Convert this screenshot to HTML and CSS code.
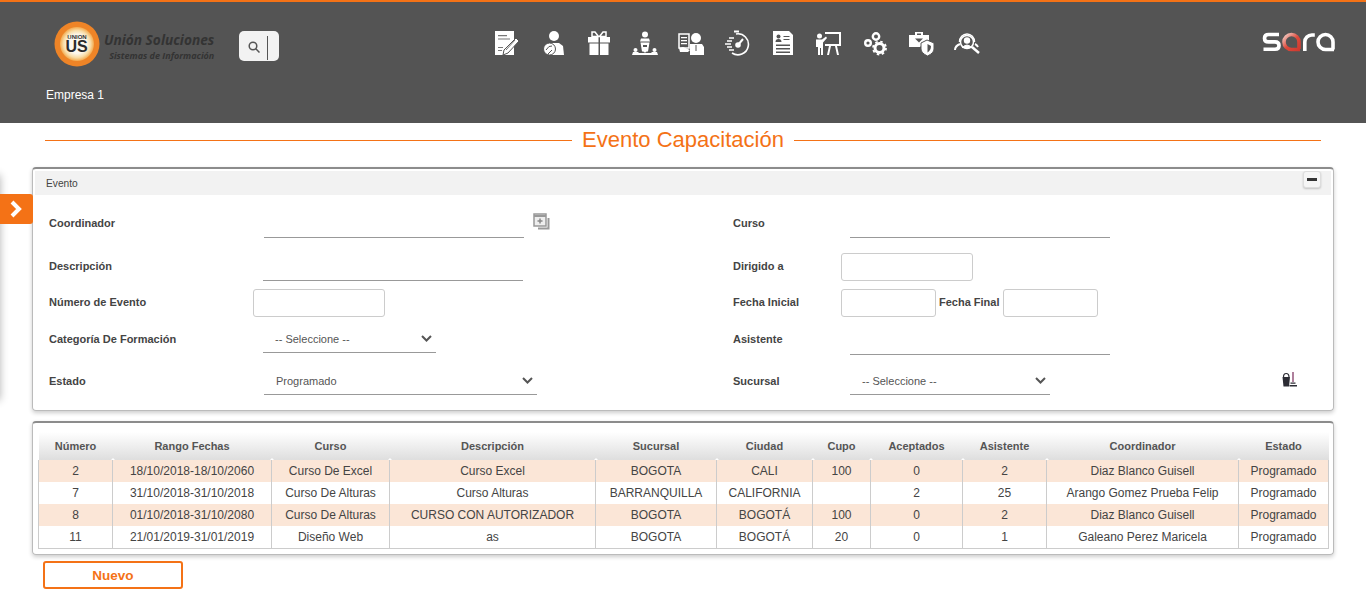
FILE: index.html
```html
<!DOCTYPE html>
<html lang="es">
<head>
    <meta charset="UTF-8">
    <title>Evento Capacitación</title>
    <link rel="stylesheet" href="styles.css">
</head>
<body>
    <header class="topbar">
        <div class="topbar-main">
            <div class="logo">
                <svg class="logo-mark" width="46" height="46" viewBox="0 0 46 46">
                    <defs>
                        <radialGradient id="ringfill">
                            <stop offset="0.55" stop-color="#fdf8ee"/>
                            <stop offset="0.8" stop-color="#f8dca6"/>
                            <stop offset="1" stop-color="#f3a94e"/>
                        </radialGradient>
                    </defs>
                    <circle cx="23" cy="23" r="22.500" fill="#ee8427"/>
                    <circle cx="23" cy="23" r="17" fill="url(#ringfill)"/>
                    <text class="mark-small" x="23" y="17.500" text-anchor="middle">UNION</text>
                    <text class="mark-big" x="22.500" y="31" text-anchor="middle">US</text>
                </svg>
                <div class="logo-text">
                    <span class="logo-name">Unión Soluciones</span>
                    <span class="logo-sub">Sistemas de Información</span>
                </div>
            </div>
            <div class="search-box">
                <svg class="search-glass" width="12" height="12" viewBox="0 0 12 12" fill="none" stroke="#555" stroke-width="1.500"><circle cx="5" cy="5" r="3.800"/><path d="M7.800 7.800L11.500 11.500"/></svg>
                <span class="search-caret"></span>
            </div>
            <nav class="menu-icons">
                <svg viewBox="0 0 26 26" fill="#fff"><path d="M1 1h19v24H1z"/><path d="M4 5h9v1.300H4zM4 8.500h12v1H4zM4 17h5v1H4zM4 20h4v1H4z" fill="#777"/><path d="M22 8l3 3-11 12-5 2 1-5z" stroke="#545454"/><path d="M12 20l9-10" stroke="#777"/></svg>
                <svg viewBox="0 0 26 26" fill="#fff"><circle cx="14" cy="6" r="5"/><path d="M9 13h10l4 3 1 9H9z"/><circle cx="9.500" cy="19" r="6" stroke="#545454"/><path d="M6 20q3-5 6-4M8 24l4-4" stroke="#545454" fill="none"/></svg>
                <svg viewBox="0 0 26 26" fill="#fff"><path d="M2 7h10.500v5.500H2zM14 7h10v5.500H14zM3.500 13.500h9V25h-9zM14 13.500h8.500V25H14z"/><path d="M12.500 6.500L9 2H6v4.500zM13.500 6.500L17 2h3v4.500z" fill="none" stroke="#fff" stroke-width="1.500"/></svg>
                <svg viewBox="0 0 26 26" fill="#fff"><circle cx="13" cy="4.500" r="3"/><path d="M9 8.500h8l1 3H8z"/><path d="M8.500 12.500h9l-1.500 9h-6z"/><path d="M11 15h4v2h-4z" fill="#545454"/><circle cx="3.500" cy="20" r="2"/><circle cx="22.500" cy="20" r="2"/><circle cx="13" cy="21" r="1.500"/><path d="M0 25l1-3h5l1 1h12l1-1h5l1 3z"/></svg>
                <svg viewBox="0 0 26 26" fill="#fff"><circle cx="18" cy="8" r="5"/><path d="M12 14h12l2 3v8H12z"/><path d="M1 4h10v14H1z" fill="none" stroke="#fff" stroke-width="1.500"/><path d="M3 7h6v1.300H3zM3 10h6v1.300H3zM3 13h6v1.300H3z"/><path d="M1 18l4-1 7 3-2 2H2z"/><path d="M18 15v6" stroke="#545454"/></svg>
                <svg viewBox="0 0 26 26" fill="none" stroke="#fff" stroke-width="1.600"><path d="M12 4a10.500 10.500 0 1 1-4 19"/><path d="M14 15l5-6" stroke-width="2"/><circle cx="14" cy="15" r="2" fill="#fff"/><path d="M10 1.500h5" stroke-width="2"/><path d="M5 8h5M3 11h5M1 14h6M3 17h5M5 20h5" stroke-width="1.400"/></svg>
                <svg viewBox="0 0 26 26" fill="#fff"><path d="M3 1h16l4 4v20H3z"/><circle cx="8.500" cy="6.500" r="2" fill="#545454"/><path d="M5.500 12q0-3 3-3t3 3zM13.500 6h6v1h-6zM13.500 9h6v1h-6zM6 14.500h14V16H6zM6 18h14v1.500H6zM6 21.500h14V23H6z" fill="#545454"/></svg>
                <svg viewBox="0 0 26 26" fill="#fff"><circle cx="3.500" cy="6" r="2.500"/><path d="M0 9.500h6l4-3 1 1.500-4 4.500V25H5v-7H4v7H2v-8H0z"/><path d="M9 2h16v14H9v-2h14V4H9z"/><path d="M13 16h2l-2 9h-2zM19 16h2l2 9h-2z"/></svg>
                <svg viewBox="0 0 26 26" fill="none" stroke="#fff"><circle cx="6" cy="13" r="2.800" stroke-width="2.400"/><circle cx="14" cy="6.500" r="3.200" stroke-width="2.400"/><circle cx="17.500" cy="18" r="4.500" stroke-width="3"/><circle cx="17.500" cy="18" r="6.500" stroke-width="1.800" stroke-dasharray="2.500 2.600"/></svg>
                <svg viewBox="0 0 26 26" fill="#fff"><path d="M7 2h8v3h6v10h-7l-2 2H1V5h6zM9 3.500V5h4V3.500z"/><path d="M7 8.500l4 4 4-4z" fill="#545454"/><path d="M13 13l6-3 7 3v6q0 4-6.500 7-6.500-3-6.500-7z" stroke="#545454"/><path d="M19.500 14l3.500 2q0 4-3.500 6.500z" fill="#545454"/></svg>
                <svg viewBox="0 0 26 26" fill="none" stroke="#fff" stroke-width="1.500"><path d="M5.500 12a7.500 8 0 0 1 15 0"/><circle cx="13" cy="12" r="6.500"/><circle cx="13" cy="10.500" r="3.200" fill="#fff" stroke="none"/><path d="M8 18q5-6 10 0" fill="#fff" stroke-width="1"/><path d="M1 20q0-4 5-6M21 14q2 1 3 3" stroke-width="2"/><path d="M18 17l7 6" stroke-width="2.500"/></svg>
            </nav>
            <div class="sara">
                <svg width="74" height="22" viewBox="0 0 74 22" fill="none" stroke="#fff" stroke-width="3.600">
                    <defs>
                        <linearGradient id="saraRed" x1="0" y1="0" x2="1" y2="1">
                            <stop offset="0" stop-color="#f3d0c8"/>
                            <stop offset="0.5" stop-color="#dd4a3c"/>
                            <stop offset="1" stop-color="#cf3a30"/>
                        </linearGradient>
                    </defs>
                    <path d="M17 3.500H6.500q-4 0-4 3.700t4 3.700h6.500q4 0 4 3.700t-4 3.700H1.500"/>
                    <path d="M38 18.500h-8.500a7.500 7.500 0 1 1 7.500-7.500v7" stroke="url(#saraRed)"/>
                    <path d="M42.800 20V11a7 7 0 0 1 7-7h3"/>
                    <path d="M72 18.500h-8.500a7.500 7.500 0 1 1 7.500-7.500v7.500"/>
                </svg>
            </div>
        </div>
        <div class="company">Empresa 1</div>
    </header>

    <div class="side-shadow"></div>
    <button class="side-tab" type="button">
        <svg width="14" height="18" viewBox="0 0 14 18" fill="none" stroke="#fff" stroke-width="4"><path d="M3 2l7 7-7 7"/></svg>
    </button>

    <main class="content">
        <h1 class="page-title"><span>Evento Capacitación</span></h1>

        <section class="panel">
            <div class="panel-head">
                <span>Evento</span>
                <button class="collapse" type="button"><i></i></button>
            </div>
            <form class="form-grid">
                <div class="field">
                    <label class="lbl lbl-left up">Coordinador</label>
                    <input class="line-input w260" type="text">
                    <svg class="add-icon" width="18" height="17" viewBox="0 0 18 17">
                        <path d="M1 1h12v12H1z" fill="#eee" stroke="#999" stroke-width="1.500"/>
                        <path d="M1 3h12" stroke="#999" stroke-width="2"/>
                        <path d="M4.500 8h5M7 5.500v5" stroke="#888" stroke-width="1.500"/>
                        <path d="M15.500 5v10.500H5" fill="none" stroke="#999" stroke-width="2"/>
                    </svg>
                </div>
                <div class="field">
                    <label class="lbl lbl-right up">Curso</label>
                    <input class="line-input w260" type="text">
                </div>

                <div class="field">
                    <label class="lbl lbl-left up">Descripción</label>
                    <input class="line-input w260 nudge" type="text">
                </div>
                <div class="field">
                    <label class="lbl lbl-right box-next up">Dirigido a</label>
                    <input class="box-input w132" type="text">
                </div>

                <div class="field">
                    <label class="lbl lbl-left box-next up">Número de Evento</label>
                    <input class="box-input w132" type="text">
                </div>
                <div class="field">
                    <label class="lbl lbl-right box-next up">Fecha Inicial</label>
                    <input class="box-input w95" type="text">
                    <label class="lbl lbl-inline up">Fecha Final</label>
                    <input class="box-input w95" type="text">
                </div>

                <div class="field">
                    <label class="lbl lbl-left">Categoría De Formación</label>
                    <div class="select-line w173 nudge"><span>-- Seleccione --</span><svg width="11" height="7" viewBox="0 0 11 7" fill="none" stroke="#555" stroke-width="2"><path d="M1 1l4.500 4.500L10 1"/></svg></div>
                </div>
                <div class="field">
                    <label class="lbl lbl-right">Asistente</label>
                    <input class="line-input w260 low" type="text">
                </div>

                <div class="field">
                    <label class="lbl lbl-left">Estado</label>
                    <div class="select-line w273"><span>Programado</span><svg width="11" height="7" viewBox="0 0 11 7" fill="none" stroke="#555" stroke-width="2"><path d="M1 1l4.500 4.500L10 1"/></svg></div>
                </div>
                <div class="field">
                    <label class="lbl lbl-right">Sucursal</label>
                    <div class="select-line w200"><span>-- Seleccione --</span><svg width="11" height="7" viewBox="0 0 11 7" fill="none" stroke="#555" stroke-width="2"><path d="M1 1l4.500 4.500L10 1"/></svg></div>
                    <svg class="broom" width="15" height="15" viewBox="0 0 15 15">
                        <path d="M0.500 5h7.500l-1 9.500H1.500z" fill="#2c2c34"/>
                        <path d="M1.500 5q0-3.500 2.700-3.500T7 5" fill="none" stroke="#2c2c34" stroke-width="1.200"/>
                        <path d="M11 0v10" stroke="#7a2a5a" stroke-width="1.200"/>
                        <path d="M8.500 10.500h5v1.300h-5zM7.500 13h7.500v1.500H7.500z" fill="#2c2c34"/>
                    </svg>
                </div>
            </form>
        </section>

        <section class="panel panel-table">
            <table class="grid">
                <colgroup>
                    <col class="c1"><col class="c2"><col class="c3"><col class="c4"><col class="c5"><col class="c6"><col class="c7"><col class="c8"><col class="c9"><col class="c10"><col class="c11">
                </colgroup>
                <thead>
                    <tr><th>Número</th><th>Rango Fechas</th><th>Curso</th><th>Descripción</th><th>Sucursal</th><th>Ciudad</th><th>Cupo</th><th>Aceptados</th><th>Asistente</th><th>Coordinador</th><th>Estado</th></tr>
                </thead>
                <tbody>
                    <tr><td>2</td><td>18/10/2018-18/10/2060</td><td>Curso De Excel</td><td>Curso Excel</td><td>BOGOTA</td><td>CALI</td><td>100</td><td>0</td><td>2</td><td>Diaz Blanco Guisell</td><td>Programado</td></tr>
                    <tr><td>7</td><td>31/10/2018-31/10/2018</td><td>Curso De Alturas</td><td>Curso Alturas</td><td>BARRANQUILLA</td><td>CALIFORNIA</td><td></td><td>2</td><td>25</td><td>Arango Gomez Prueba Felip</td><td>Programado</td></tr>
                    <tr><td>8</td><td>01/10/2018-31/10/2080</td><td>Curso De Alturas</td><td>CURSO CON AUTORIZADOR</td><td>BOGOTA</td><td>BOGOTÁ</td><td>100</td><td>0</td><td>2</td><td>Diaz Blanco Guisell</td><td>Programado</td></tr>
                    <tr><td>11</td><td>21/01/2019-31/01/2019</td><td>Diseño Web</td><td>as</td><td>BOGOTA</td><td>BOGOTÁ</td><td>20</td><td>0</td><td>1</td><td>Galeano Perez Maricela</td><td>Programado</td></tr>
                </tbody>
            </table>
        </section>

        <button class="btn-new" type="button">Nuevo</button>
    </main>
</body>
</html>
```

FILE: styles.css
```css
* {
    box-sizing: border-box;
}
html, body {
    height: 100%;
}
body {
    margin: 0;
    font-family: "Liberation Sans", Arial, sans-serif;
    font-size: 12px;
    color: #444;
    background: #fff;
    overflow: hidden;
}

/* header */
.topbar {
    height: 123px;
    background: #545454;
    border-top: 2px solid #f47216;
}
.topbar-main {
    display: flex;
    align-items: flex-start;
    height: 86px;
    padding: 19px 0 0 54px;
}
.logo {
    display: flex;
    align-items: flex-start;
    width: 185px;
}
.logo-mark {
    flex: none;
}
.mark-small {
    font-family: "Liberation Sans", Arial, sans-serif;
    font-size: 6px;
    font-weight: bold;
    fill: #333;
}
.mark-big {
    font-family: "Liberation Sans", Arial, sans-serif;
    font-size: 16px;
    font-weight: bold;
    fill: #2b2b2b;
}
.logo-text {
    display: flex;
    flex-direction: column;
    align-items: flex-end;
    margin: 11px 0 0 4px;
    color: #333;
    font-style: italic;
    font-weight: bold;
    font-family: "Open Sans", sans-serif;
    white-space: nowrap;
}
.logo-name {
    font-size: 13.700px;
    line-height: 15px;
}
.logo-sub {
    margin-top: 2px;
    font-size: 9px;
    line-height: 13px;
}
.search-box {
    display: flex;
    align-items: center;
    width: 40px;
    height: 30px;
    margin-top: 10px;
    padding-left: 9px;
    background: #f2f2f2;
    border-radius: 5px;
}
.search-glass {
    margin-top: 2px;
}
.search-caret {
    width: 1px;
    height: 24px;
    margin: 3px 0 0 7px;
    background: #555;
}
.menu-icons {
    display: flex;
    gap: 20px;
    margin: 9px 0 0 215px;
}
.menu-icons svg {
    width: 26px;
    height: 26px;
}
.sara {
    margin: 10px 0 0 282px;
}
.company {
    padding-left: 46px;
    color: #fff;
    font-size: 12px;
    line-height: 14px;
}

/* left tab */
.side-shadow {
    position: absolute;
    left: -20px;
    top: 175px;
    width: 20px;
    height: 225px;
    box-shadow: 0 0 8px rgba(0, 0, 0, .3);
}
.side-tab {
    position: absolute;
    left: 0;
    top: 194px;
    width: 33px;
    height: 30px;
    padding: 0;
    border: none;
    border-radius: 0 3px 3px 0;
    background: #f47216;
}
.side-tab svg {
    display: block;
    margin: 0 0 0 9px;
}

/* title */
.content {
    padding: 0 32px;
}
.page-title {
    display: flex;
    align-items: center;
    gap: 10px;
    height: 34px;
    margin: 0 13px 10px;
    font-size: 22px;
    font-weight: normal;
    color: #f47216;
}
.page-title::before,
.page-title::after {
    content: "";
    flex: 1;
    height: 1px;
    background: #f47216;
}

/* panels */
.panel {
    border: 1px solid #bbb;
    border-top: 2px solid #8c8c8c;
    border-radius: 4px;
    box-shadow: 0 2px 4px rgba(0, 0, 0, .2);
}
.panel-head {
    display: flex;
    justify-content: space-between;
    align-items: flex-start;
    height: 24px;
    margin: 2px 2px 0;
    padding: 0 10px 0 11px;
    background: #f2f2f2;
    font-size: 10.200px;
    line-height: 24px;
}
.panel-head span {
    margin-top: 1px;
}
.collapse {
    width: 18px;
    height: 17px;
    padding: 0;
    display: flex;
    align-items: center;
    justify-content: center;
    background: #f5f5f5;
    border: 1px solid #ddd;
    border-radius: 3px;
    box-shadow: 0 1px 2px rgba(0, 0, 0, .2);
}
.collapse i {
    display: block;
    width: 10px;
    height: 3px;
    background: #333;
}

/* form */
.form-grid {
    display: grid;
    grid-template-columns: 684px 1fr;
    grid-template-rows: 43px 43px 36px 36px 42px;
    align-items: end;
    height: 215px;
    padding-left: 16px;
}
.field {
    display: flex;
    align-items: center;
    height: 28px;
}
.lbl {
    flex: none;
    font-size: 11px;
    font-weight: bold;
    color: #444;
}
.up {
    margin-bottom: 2px;
}
.lbl-left {
    width: 215px;
}
.lbl-left.box-next {
    width: 204px;
}
.lbl-right {
    width: 117px;
}
.lbl-right.box-next {
    width: 108px;
}
.lbl-inline {
    margin: 0 3px 2px 3px;
}
.line-input {
    height: 28px;
    border: none;
    border-bottom: 1px solid #999;
    background: transparent;
}
.nudge {
    margin-left: -1px;
}
.low {
    margin-top: 3px;
}
.box-input {
    height: 28px;
    border: 1px solid #ccc;
    border-radius: 3px;
    background: #fff;
}
.w260 { width: 260px; }
.w132 { width: 132px; }
.w95 { width: 95px; }
.w173 { width: 173px; }
.w273 { width: 273px; }
.w200 { width: 200px; }
.add-icon {
    margin: -6px 0 0 9px;
}
.select-line {
    display: flex;
    align-items: center;
    justify-content: space-between;
    height: 28px;
    padding: 0 4px 0 12px;
    border-bottom: 1px solid #999;
    font-size: 11px;
    color: #555;
}
.broom {
    margin: 0 0 4px 232px;
}

/* table */
.panel-table {
    margin-top: 10px;
    height: 134px;
    padding: 9px 4px 0 5px;
}
.grid {
    width: 1290px;
    border-collapse: collapse;
    table-layout: fixed;
    font-size: 12px;
}
.c1 { width: 74px; }
.c2 { width: 159px; }
.c3 { width: 118px; }
.c4 { width: 206px; }
.c5 { width: 121px; }
.c6 { width: 96px; }
.c7 { width: 58px; }
.c8 { width: 92px; }
.c9 { width: 84px; }
.c10 { width: 192px; }
.c11 { width: 90px; }
.grid th {
    position: relative;
    height: 28px;
    padding: 0;
    font-size: 11px;
    color: #555;
    background: linear-gradient(#fff, #dedede);
}
.grid th + th::before {
    content: "";
    position: absolute;
    left: -2px;
    bottom: 0;
    border: 2px solid transparent;
    border-top: 0;
    border-bottom-color: #fff;
}
.grid td {
    height: 22px;
    padding: 0;
    text-align: center;
    color: #444;
    border: 1px solid #ccc;
    border-width: 0 1px;
    white-space: nowrap;
}
.grid tbody tr:nth-child(odd) td {
    background: #fbe6d7;
}
.grid tbody tr:last-child td {
    border-bottom: 1px solid #ccc;
}

.btn-new {
    display: block;
    width: 140px;
    height: 28px;
    margin: 6px 0 0 11px;
    background: #fff;
    border: 2px solid #f47216;
    border-radius: 3px;
    color: #f47216;
    font-family: "Liberation Sans", Arial, sans-serif;
    font-size: 13.500px;
    font-weight: bold;
}
```
